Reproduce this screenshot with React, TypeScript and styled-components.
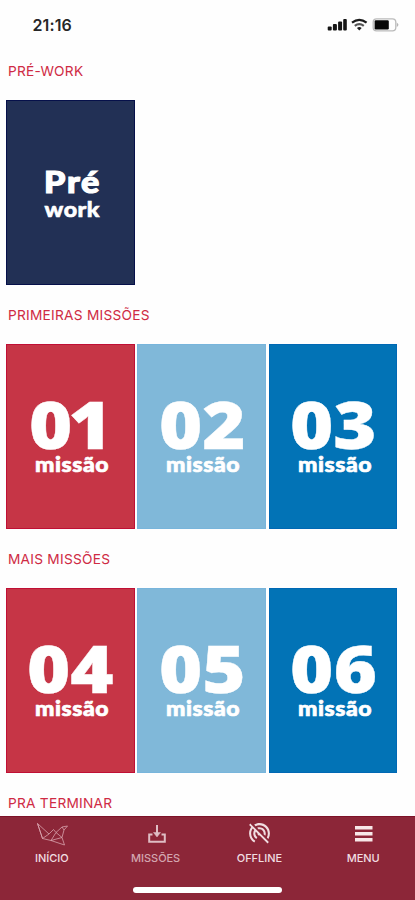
import React from 'react';
import styled, { createGlobalStyle } from 'styled-components';
import { MdPortableWifiOff } from 'react-icons/md';

const GlobalStyle = createGlobalStyle`
  * { box-sizing: border-box; }
  body { margin: 0; background: #fefefe; }
`;

const Screen = styled.div`
  width: 415px;
  height: 900px;
  overflow: hidden;
  display: flex;
  flex-direction: column;
  background: #fefefe;
  font-family: Inter, sans-serif;
`;

const StatusBar = styled.header`
  flex: none;
  height: 56px;
  padding: 15.4px 16px 0 32.5px;
  display: flex;
  justify-content: space-between;
  align-items: flex-start;
`;

const Clock = styled.time`
  font-size: 16px;
  line-height: 20px;
  font-weight: 600;
  letter-spacing: 0.1px;
  color: #262626;
`;

const StatusIcons = styled.svg`
  display: block;
  width: 74px;
  height: 20px;
`;

const Content = styled.main`
  flex: 1;
  min-height: 0;
  overflow: hidden;
`;

const Section = styled.section`
  height: 244px;
`;

const SectionTitle = styled.h2`
  margin: 0;
  height: 44px;
  padding: 5px 8px 0;
  font-size: 13.7px;
  line-height: 20px;
  font-weight: 400;
  letter-spacing: 0.25px;
  color: #cf2b44;
`;

const CardRow = styled.div`
  display: grid;
  grid-template-columns: repeat(3, 128.5px);
  column-gap: 2.8px;
  padding-left: 6px;
`;

type Tone = 'navy' | 'red' | 'sky' | 'blue';

const fills: Record<Tone, [string, string]> = {
  navy: ['#223055', '#06104a'],
  red: ['#c63546', '#c00f35'],
  sky: ['#80b8d9', '#78b5dc'],
  blue: ['#0273b6', '#0068b4'],
};

const Card = styled.article<{ $tone: Tone }>`
  height: 184.5px;
  background: ${(p) => fills[p.$tone][0]};
  border: 1px solid ${(p) => fills[p.$tone][1]};
  color: #fff;
  font-family: Lato, sans-serif;
  font-weight: 900;
  white-space: nowrap;
`;

const Figure = styled.div<{ $left: number; $spacing: number }>`
  height: 107px;
  padding-top: 53px;
  margin-left: ${(p) => p.$left}px;
  font-family: 'Open Sans', sans-serif;
  font-weight: 800;
  font-size: 66px;
  line-height: 50px;
  letter-spacing: ${(p) => p.$spacing}px;
  transform: scaleX(1.12);
  transform-origin: left;
  -webkit-text-stroke: 0.4px #fff;
`;

const Caption = styled.div`
  margin-left: 28px;
  font-size: 21.5px;
  line-height: 24px;
  letter-spacing: 0.5px;
  transform: scaleX(1.07);
  transform-origin: left;
  -webkit-text-stroke: 0.7px #fff;
`;

const PreTitle = styled.div`
  margin-top: 60.5px;
  padding-left: 37px;
  font-size: 31px;
  line-height: 38px;
  letter-spacing: 1.6px;
  transform: scaleX(1.1);
  transform-origin: 37px center;
  -webkit-text-stroke: 1.2px #fff;
`;

const PreCaption = styled.div`
  padding-left: 37.5px;
  font-size: 21.5px;
  line-height: 19px;
  letter-spacing: 0.5px;
  transform: scaleX(1.08);
  transform-origin: 37.5px center;
  -webkit-text-stroke: 0.6px #fff;
`;

const TabBar = styled.nav`
  flex: none;
  height: 84px;
  background: #8c2638;
  border-top: 1px solid #7d1229;
  display: flex;
  flex-direction: column;
  align-items: center;
`;

const Tabs = styled.div`
  width: 100%;
  height: 70px;
  display: grid;
  grid-template-columns: repeat(4, 1fr);
`;

const Tab = styled.a<{ $active?: boolean }>`
  display: flex;
  flex-direction: column;
  align-items: center;
  padding-top: 4px;
  font-size: 11px;
  line-height: 14px;
  font-weight: 500;
  letter-spacing: -0.05px;
  color: ${(p) => (p.$active ? '#d3a5af' : '#f1dde1')};
`;

const TabIcon = styled.span`
  height: 30px;
  display: flex;
  align-items: flex-start;
  justify-content: center;
  svg { display: block; }
`;

const HomeIndicator = styled.div`
  width: 149px;
  height: 6px;
  border-radius: 3px;
  background: #fff;
`;

interface Mission { number: string; tone: Tone; left: number; spacing: number }

const first: Mission[] = [
  { number: '01', tone: 'red', left: 22, spacing: -3.5 },
  { number: '02', tone: 'sky', left: 20.5, spacing: 0 },
  { number: '03', tone: 'blue', left: 20.5, spacing: 0 },
];
const more: Mission[] = [
  { number: '04', tone: 'red', left: 19.5, spacing: 0 },
  { number: '05', tone: 'sky', left: 20.5, spacing: 0 },
  { number: '06', tone: 'blue', left: 20.5, spacing: 0.3 },
];

function Missions({ items }: { items: Mission[] }) {
  return (
    <CardRow>
      {items.map((m) => (
        <Card key={m.number} $tone={m.tone}>
          <Figure $left={m.left} $spacing={m.spacing}>{m.number}</Figure>
          <Caption>missão</Caption>
        </Card>
      ))}
    </CardRow>
  );
}

function Status() {
  return (
    <StatusIcons viewBox="0 0 74 20">
      <g fill="#151515">
        <rect x="2.7" y="11.5" width="4" height="4" rx="1" />
        <rect x="7.9" y="9" width="4" height="6.5" rx="1" />
        <rect x="13.1" y="6.5" width="4" height="9" rx="1" />
        <rect x="18.2" y="4" width="3.6" height="11.5" rx="1" />
      </g>
      <g fill="none" stroke="#1c1c1c" strokeWidth="2.2">
        <path d="M27 7.600q7.300-5.600 14.600 0" />
        <path d="M29.800 10.800q4.500-3.500 9 0" stroke="#555" />
      </g>
      <path d="M31.900 12.900q2.400-1.600 4.800 0l-2.400 2.600z" fill="#1c1c1c" />
      <rect x="48.2" y="3.800" width="22.600" height="12" rx="3.400" fill="none" stroke="#bbb" strokeWidth="1.3" />
      <rect x="49.6" y="5.200" width="14.200" height="9.200" rx="1.200" fill="#080808" />
      <path d="M71.800 7.500q3.200 2.300 0 4.600z" fill="#b5b5b5" />
    </StatusIcons>
  );
}

function BirdIcon() {
  return (
    <svg width="34" height="26" viewBox="0 0 34 26" fill="none" stroke="#dca9b3" strokeWidth=".75" strokeLinejoin="round">
      <path d="M2.500 2.500L14 13l4.500-4.500 2.500 3 6-5.500 5.500-1L29 9l-2 7.500L29.500 24 16 19.500 7.500 17.500z" />
      <path d="M2.500 2.500L7.500 17.500 14 13M21 11.500l6 5M27 6l2 3M21 11.500l-5 8M27 16.500l-11 3" />
    </svg>
  );
}

function DownloadIcon() {
  return (
    <svg width="20" height="24" viewBox="0 0 20 24" fill="none" stroke="#dfbdc4" strokeWidth="2">
      <path d="M5.500 13.500H2.200v7.300h15.600v-7.300h-3.300M10 4v9" transform="translate(1 0)" />
      <path d="M6.500 11.500h7L10 16z" transform="translate(1 0)" fill="#dfbdc4" strokeWidth=".5" />
    </svg>
  );
}

function MenuIcon() {
  return (
    <svg width="20" height="22" viewBox="0 0 20 22" fill="#f7e7e8">
      <rect x="2" y="5" width="17.500" height="3.500" />
      <rect x="2" y="11" width="17.500" height="3.500" />
      <rect x="2" y="17" width="17.500" height="3.500" />
    </svg>
  );
}

export default function App() {
  return (
    <>
      <GlobalStyle />
      <Screen>
        <StatusBar>
          <Clock>21:16</Clock>
          <Status />
        </StatusBar>
        <Content>
          <Section>
            <SectionTitle>PRÉ-WORK</SectionTitle>
            <CardRow>
              <Card $tone="navy">
                <PreTitle>Pré</PreTitle>
                <PreCaption>work</PreCaption>
              </Card>
            </CardRow>
          </Section>
          <Section>
            <SectionTitle>PRIMEIRAS MISSÕES</SectionTitle>
            <Missions items={first} />
          </Section>
          <Section>
            <SectionTitle>MAIS MISSÕES</SectionTitle>
            <Missions items={more} />
          </Section>
          <SectionTitle>PRA TERMINAR</SectionTitle>
        </Content>
        <TabBar>
          <Tabs>
            <Tab><TabIcon><BirdIcon /></TabIcon>INÍCIO</Tab>
            <Tab $active><TabIcon><DownloadIcon /></TabIcon>MISSÕES</Tab>
            <Tab><TabIcon><MdPortableWifiOff size={25} /></TabIcon>OFFLINE</Tab>
            <Tab><TabIcon><MenuIcon /></TabIcon>MENU</Tab>
          </Tabs>
          <HomeIndicator />
        </TabBar>
      </Screen>
    </>
  );
}
